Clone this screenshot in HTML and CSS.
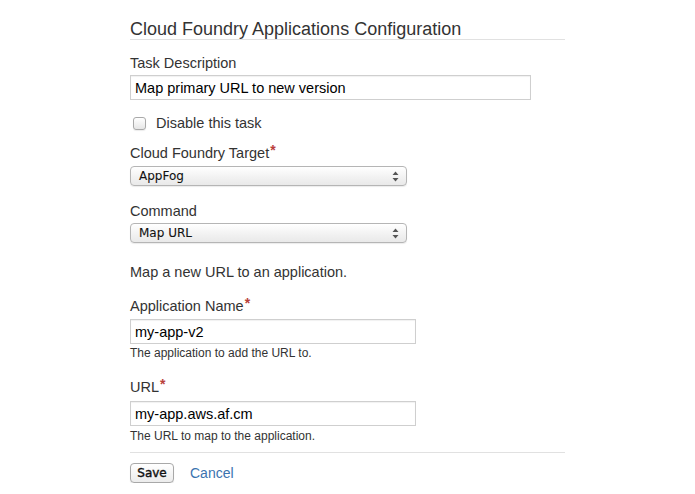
FILE: index.html
```html
<!DOCTYPE html>
<html>
<head>
<meta charset="utf-8">
<link rel="stylesheet" href="styles.css">
</head>
<body>
<div class="page">
  <h1 class="title">Cloud Foundry Applications Configuration</h1>

  <div class="label lbl-task">Task Description</div>
  <input class="text text-wide in-task" type="text" value="Map primary URL to new version">

  <label class="check-row">
    <span class="checkbox"></span>
    <span>Disable this task</span>
  </label>

  <div class="label lbl-target">Cloud Foundry Target<span class="req">*</span></div>
  <div class="select sel-target">
    <span class="sel-text">AppFog</span>
    <svg class="sel-arrows" width="7" height="11" viewBox="0 0 7 11"><path d="M3.5 0.5 L6.5 4 L0.5 4 Z M3.5 10.5 L6.5 7 L0.5 7 Z" fill="#555"/></svg>
  </div>

  <div class="label lbl-command">Command</div>
  <div class="select sel-command">
    <span class="sel-text">Map URL</span>
    <svg class="sel-arrows" width="7" height="11" viewBox="0 0 7 11"><path d="M3.5 0.5 L6.5 4 L0.5 4 Z M3.5 10.5 L6.5 7 L0.5 7 Z" fill="#555"/></svg>
  </div>

  <div class="label desc">Map a new URL to an application.</div>

  <div class="label lbl-app">Application Name<span class="req">*</span></div>
  <input class="text text-mid in-app" type="text" value="my-app-v2">
  <div class="help help-app">The application to add the URL to.</div>

  <div class="label lbl-url">URL<span class="req">*</span></div>
  <input class="text text-mid in-url" type="text" value="my-app.aws.af.cm">
  <div class="help help-url">The URL to map to the application.</div>

  <div class="rule"></div>

  <div class="buttons">
    <button class="btn-save" type="button">Save</button>
    <a class="cancel" href="#">Cancel</a>
  </div>
</div>
</body>
</html>
```

FILE: styles.css
```css
html, body {
  margin: 0;
  padding: 0;
  background: #ffffff;
}

body {
  font-family: "Liberation Sans", Arial, sans-serif;
  color: #333333;
}

.page {
  width: 435px;
  padding-left: 130px;
}

.title {
  margin: 19px 0 0 0;
  font-size: 18px;
  font-weight: normal;
  line-height: 20px;
  color: #333333;
  border-bottom: 1px solid #e1e1e1;
}

.label {
  font-size: 14.5px;
  line-height: 18px;
  color: #333333;
}

.req {
  color: #b9403a;
  font-weight: bold;
  font-size: 14px;
  position: relative;
  top: -3px;
  margin-left: 1px;
}

.lbl-task { margin-top: 14px; }
.lbl-target { margin-top: 12px; }
.lbl-command { margin-top: 16px; }
.desc { margin-top: 20px; }
.lbl-app { margin-top: 16px; }
.lbl-url { margin-top: 17px; }

.text {
  display: block;
  box-sizing: border-box;
  height: 25px;
  margin: 0;
  padding: 0 0 0 4px;
  border: 1px solid #cfcfcf;
  border-radius: 0;
  box-shadow: inset 0 1px 1px rgba(0,0,0,0.06);
  font-family: "Liberation Sans", Arial, sans-serif;
  font-size: 14.5px;
  color: #000000;
  background: #ffffff;
  outline: none;
}

.text-wide { width: 401px; }
.text-mid { width: 286px; }

.in-task { margin-top: 3px; }
.in-app { margin-top: 4px; }
.in-url { margin-top: 5px; }

.check-row {
  display: flex;
  align-items: center;
  margin-top: 14px;
  height: 18px;
  font-size: 14.5px;
  line-height: 18px;
  color: #333333;
}

.checkbox {
  box-sizing: border-box;
  width: 13px;
  height: 13px;
  margin-left: 3px;
  margin-right: 10px;
  border: 1px solid #a9a9a9;
  border-radius: 3px;
  background: linear-gradient(#ffffff, #e6e6e6);
  box-shadow: 0 1px 1px rgba(0,0,0,0.08);
}

.select {
  box-sizing: border-box;
  width: 277px;
  height: 20px;
  display: flex;
  align-items: center;
  justify-content: space-between;
  padding: 0 7px 0 8px;
  border: 1px solid #b5b5b5;
  border-radius: 4px;
  background: linear-gradient(#ffffff, #f1f1f1 60%, #e9e9e9);
  box-shadow: 0 1px 1px rgba(0,0,0,0.08);
}

.sel-target { margin-top: 4px; }
.sel-command { margin-top: 3px; }

.sel-text {
  font-family: "DejaVu Sans", "Liberation Sans", sans-serif;
  font-size: 12px;
  color: #111111;
  -webkit-text-stroke: 0.1px #111111;
  line-height: 18px;
}

.sel-arrows {
  display: block;
}

.help {
  font-size: 12px;
  line-height: 15px;
  color: #333333;
}

.help-app { margin-top: 2px; }
.help-url { margin-top: 3px; }

.rule {
  margin-top: 8px;
  border-top: 1px solid #e1e1e1;
}

.buttons {
  display: flex;
  align-items: center;
  margin-top: 10px;
  gap: 16px;
}

.btn-save {
  box-sizing: border-box;
  width: 44px;
  height: 20px;
  margin: 0;
  padding: 0;
  border: 1px solid #a8a8a8;
  border-radius: 4px;
  background: linear-gradient(#ffffff, #ececec);
  box-shadow: 0 1px 1px rgba(0,0,0,0.1);
  font-family: "DejaVu Sans", "Liberation Sans", sans-serif;
  font-size: 12px;
  font-weight: normal;
  -webkit-text-stroke: 0.4px #111111;
  color: #111111;
  line-height: 18px;
}

.cancel {
  font-size: 14px;
  line-height: 18px;
  color: #3b73af;
  text-decoration: none;
}
```
